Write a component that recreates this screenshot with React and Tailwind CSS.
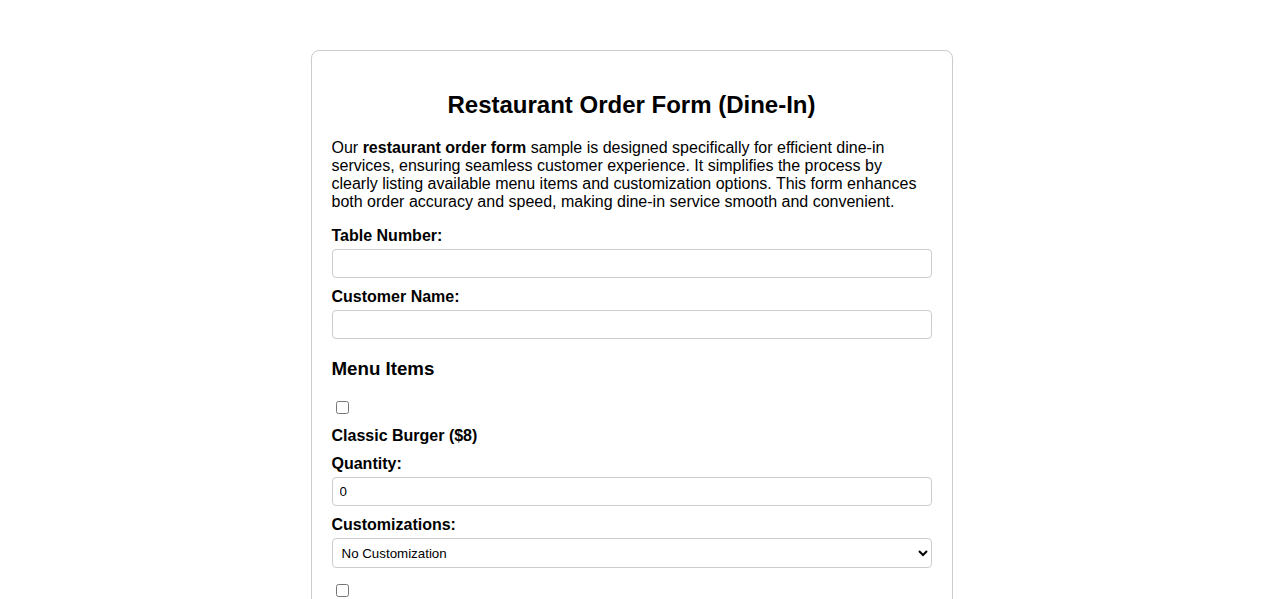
import { useState } from 'react';

const menuItems = [
  { id: 'burger', name: 'Classic Burger', price: 8 },
  { id: 'pizza', name: 'Margherita Pizza', price: 12 },
  { id: 'pasta', name: 'Spaghetti Carbonara', price: 14 },
];

const inputCls =
  'block w-full h-[29px] border border-[#ccc] rounded-[4px] px-[7px] text-[13.33px] leading-none bg-white text-black';

const labelCls = 'block text-[16px] leading-[20px] font-bold';

export default function App() {
  const [table, setTable] = useState('');
  const [customer, setCustomer] = useState('');
  const [items, setItems] = useState(
    Object.fromEntries(menuItems.map(m => [m.id, { checked: false, qty: 0, custom: 'none' }]))
  );

  const update = (id, patch) => setItems(prev => ({ ...prev, [id]: { ...prev[id], ...patch } }));

  return (
    <div className="min-h-screen bg-white font-['Liberation_Sans',Arial,sans-serif] text-black">
      <div className="mx-auto mt-[50px] w-[642px] border border-[#ccc] rounded-[8px] p-5 pb-10 bg-white">
        <h2 className="mt-5 mb-[21px] text-center text-[24px] leading-[27px] font-bold">
          Restaurant Order Form (Dine-In)
        </h2>
        <p className="mb-[15px] text-[16px] leading-[18px]">
          Our <strong className="font-bold">restaurant order form</strong> sample is designed specifically for efficient dine-in
          services, ensuring seamless customer experience. It simplifies the process by clearly listing available menu items and
          customization options. This form enhances both order accuracy and speed, making dine-in service smooth and convenient.
        </p>

        <label className={labelCls + ' mb-[3px]'}>Table Number:</label>
        <input className={inputCls + ' mb-[9px]'} type="text" value={table} onChange={e => setTable(e.target.value)} />

        <label className={labelCls + ' mb-[3px]'}>Customer Name:</label>
        <input className={inputCls} type="text" value={customer} onChange={e => setCustomer(e.target.value)} />

        <h3 className="mt-[19px] text-[18.72px] leading-[22px] font-bold">Menu Items</h3>

        {menuItems.map((m, i) => (
          <div key={m.id}>
            <input
              type="checkbox"
              className={(i === 0 ? 'mt-[21px]' : 'mt-[16px]') + ' ml-1 block w-[13px] h-[13px]'}
              checked={items[m.id].checked}
              onChange={e => update(m.id, { checked: e.target.checked })}
            />
            <label className={labelCls + ' mt-[12px]'}>
              {m.name} (${m.price})
            </label>
            <label className={labelCls + ' mt-[8px] mb-[3px]'}>Quantity:</label>
            <input
              className={inputCls}
              type="number"
              min="0"
              value={items[m.id].qty}
              onChange={e => update(m.id, { qty: e.target.value })}
            />
            <label className={labelCls + ' mt-[9px] mb-[3px]'}>Customizations:</label>
            <select
              className="block w-full h-[30px] border border-[#ccc] rounded-[4px] pl-[5px] pr-1 text-[13.33px] bg-white text-black"
              value={items[m.id].custom}
              onChange={e => update(m.id, { custom: e.target.value })}
            >
              <option value="none">No Customization</option>
              <option value="extra-cheese">Extra Cheese</option>
              <option value="no-onions">No Onions</option>
              <option value="gluten-free">Gluten-Free</option>
            </select>
          </div>
        ))}
      </div>
    </div>
  );
}
